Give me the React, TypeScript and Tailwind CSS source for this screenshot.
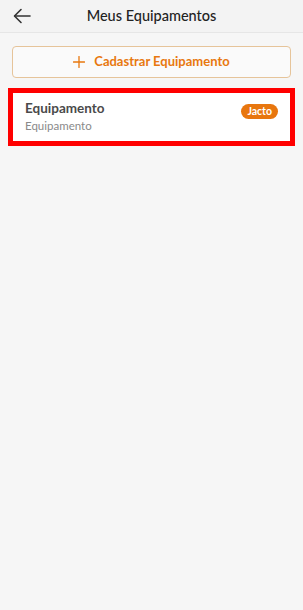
export default function App() {
  return (
    <div
      className="min-h-[610px] w-full bg-[#f6f6f6] text-[#333]"
      style={{ fontFamily: 'Lato, "Liberation Sans", sans-serif' }}
    >
      {/* Header */}
      <div className="relative flex h-[33px] items-center justify-center border-b border-[#e6e6e6] bg-[#f3f3f3]">
        <button className="absolute left-[13px] top-[8px] text-[#333]">
          <svg width="18" height="16" viewBox="0 0 18 16" fill="none" stroke="currentColor" strokeWidth="1.6" strokeLinecap="round" strokeLinejoin="round">
            <path d="M17 8H2" />
            <path d="M8 1.5L1.5 8L8 14.5" />
          </svg>
        </button>
        <h1 className="text-[14.5px] font-medium text-[#222]">Meus Equipamentos</h1>
      </div>

      <div className="flex flex-col px-3 pt-[13px]">
        {/* Add button */}
        <button className="flex h-[32px] items-center justify-center gap-[9px] rounded-[4px] border border-[#e6c49a] bg-[#fafafa] text-[13px] font-bold text-[#e8780f]">
          <svg width="12" height="12" viewBox="0 0 12 12" stroke="currentColor" strokeWidth="1.3" strokeLinecap="round">
            <path d="M6 0.5V11.5M0.5 6H11.5" />
          </svg>
          <span>Cadastrar Equipamento</span>
        </button>

        {/* Card */}
        <div className="-mx-1 mt-[10px] border-[5px] border-[#ff0000] bg-white">
          <div className="flex items-start justify-between pl-3 pr-3 pt-[7px] pb-[8px]">
            <div className="flex flex-col">
              <span className="text-[13.5px] font-bold leading-[17px] text-[#4a4a4a]">Equipamento</span>
              <span className="mt-[1px] text-[11.5px] leading-[15px] text-[#8a8a8a]">Equipamento</span>
            </div>
            <span className="mt-[4px] rounded-full bg-[#e8760e] px-[6px] text-[10.5px] font-bold leading-[15px] text-white">
              Jacto
            </span>
          </div>
        </div>
      </div>
    </div>
  );
}
